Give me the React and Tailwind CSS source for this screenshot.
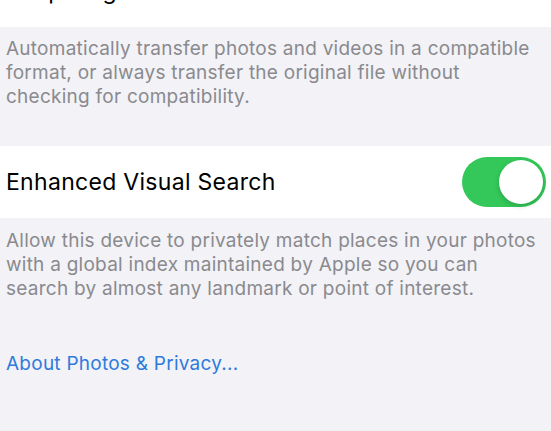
import React, { useState } from 'react';

function Toggle({ on, onChange }) {
  return (
    <button
      onClick={() => onChange(!on)}
      className={`flex h-[50px] w-[84px] items-center rounded-full p-[3px] ${
        on ? 'justify-end bg-[#34c759]' : 'justify-start bg-[#e9e9ea]'
      }`}
    >
      <span className="block h-[44px] w-[44px] rounded-full bg-white shadow-[0_2px_5px_rgba(0,0,0,0.18)]" />
    </button>
  );
}

export default function App() {
  const [visualSearch, setVisualSearch] = useState(true);

  return (
    <div
      className="h-[431px] w-full overflow-hidden bg-[#f2f2f7] antialiased"
      style={{ fontFamily: 'Inter, "Noto Sans", sans-serif' }}
    >
      {/* row cut off at the top of the screenshot */}
      <div className="-mt-[46px] flex h-[73px] items-center justify-between bg-white pl-[6px] pr-[46px]">
        <span className="text-[23px] leading-[28px] tracking-[0.3px] text-black">Keep Originals</span>
        <svg width="18" height="18" viewBox="0 0 18 18" className="mt-[2px]">
          <path d="M2 9.5 L7 15 L16 3" fill="none" stroke="#2f7cf6" strokeWidth="2.6" strokeLinecap="round" strokeLinejoin="round" />
        </svg>
      </div>

      <p className="pl-[6px] pr-[10px] pt-[10px] text-[19px] leading-[24px] tracking-[0.25px] text-[#8a8a8e]">
        Automatically transfer photos and videos in a compatible format, or always transfer the original file without checking for compatibility.
      </p>

      <div className="mt-[37px] flex h-[72px] items-center justify-between bg-white pl-[6px] pr-[5px]">
        <span className="text-[23px] leading-[28px] tracking-[0.3px] text-black">Enhanced Visual Search</span>
        <Toggle on={visualSearch} onChange={setVisualSearch} />
      </div>

      <p className="pl-[6px] pr-[10px] pt-[11px] text-[19px] leading-[24px] tracking-[0.25px] text-[#8a8a8e]">
        Allow this device to privately match places in your photos with a global index maintained by Apple so you can search by almost any landmark or point of interest.
      </p>

      <div className="mt-[51px] px-[6px]">
        <a href="#" className="text-[19px] leading-[24px] tracking-[0.25px] text-[#2f7bdc]">
          About Photos &amp; Privacy...
        </a>
      </div>
    </div>
  );
}
